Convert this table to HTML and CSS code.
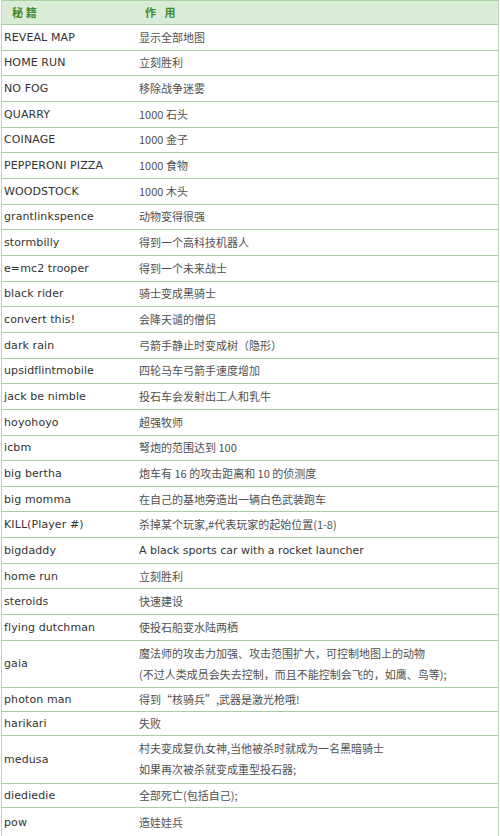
FILE: index.html
```html
<!DOCTYPE html>
<html lang="zh">
<head>
<meta charset="utf-8">
<title>秘籍</title>
<link rel="stylesheet" href="styles.css">
</head>
<body>
<div class="sheet">
  <div class="row head"><div class="c1">秘&nbsp;籍</div><div class="c2">作&nbsp;用</div></div>
  <div class="row"><div class="c1">REVEAL MAP</div><div class="c2 zh">显示全部地图</div></div>
  <div class="row"><div class="c1">HOME RUN</div><div class="c2 zh">立刻胜利</div></div>
  <div class="row"><div class="c1">NO FOG</div><div class="c2 zh">移除战争迷雾</div></div>
  <div class="row"><div class="c1">QUARRY</div><div class="c2 zh">1000 石头</div></div>
  <div class="row"><div class="c1">COINAGE</div><div class="c2 zh">1000 金子</div></div>
  <div class="row"><div class="c1">PEPPERONI PIZZA</div><div class="c2 zh">1000 食物</div></div>
  <div class="row"><div class="c1">WOODSTOCK</div><div class="c2 zh">1000 木头</div></div>
  <div class="row"><div class="c1">grantlinkspence</div><div class="c2 zh">动物变得很强</div></div>
  <div class="row"><div class="c1">stormbilly</div><div class="c2 zh">得到一个高科技机器人</div></div>
  <div class="row"><div class="c1">e=mc2 trooper</div><div class="c2 zh">得到一个未来战士</div></div>
  <div class="row"><div class="c1">black rider</div><div class="c2 zh">骑士变成黑骑士</div></div>
  <div class="row"><div class="c1">convert this!</div><div class="c2 zh">会降天谴的僧侣</div></div>
  <div class="row"><div class="c1">dark rain</div><div class="c2 zh">弓箭手静止时变成树（隐形）</div></div>
  <div class="row"><div class="c1">upsidflintmobile</div><div class="c2 zh">四轮马车弓箭手速度增加</div></div>
  <div class="row"><div class="c1">jack be nimble</div><div class="c2 zh">投石车会发射出工人和乳牛</div></div>
  <div class="row"><div class="c1">hoyohoyo</div><div class="c2 zh">超强牧师</div></div>
  <div class="row"><div class="c1">icbm</div><div class="c2 zh">弩炮的范围达到 100</div></div>
  <div class="row"><div class="c1">big bertha</div><div class="c2 zh">炮车有 16 的攻击距离和 10 的侦测度</div></div>
  <div class="row"><div class="c1">big momma</div><div class="c2 zh">在自己的基地旁造出一辆白色武装跑车</div></div>
  <div class="row"><div class="c1">KILL(Player #)</div><div class="c2 zh">杀掉某个玩家,#代表玩家的起始位置(1-8)</div></div>
  <div class="row"><div class="c1">bigdaddy</div><div class="c2">A black sports car with a rocket launcher</div></div>
  <div class="row"><div class="c1">home run</div><div class="c2 zh">立刻胜利</div></div>
  <div class="row"><div class="c1">steroids</div><div class="c2 zh">快速建设</div></div>
  <div class="row"><div class="c1">flying dutchman</div><div class="c2 zh">使投石船变水陆两栖</div></div>
  <div class="row tall"><div class="c1">gaia</div><div class="c2 zh">魔法师的攻击力加强、攻击范围扩大，可控制地图上的动物<br>(不过人类成员会失去控制，而且不能控制会飞的，如鹰、鸟等);</div></div>
  <div class="row short"><div class="c1">photon man</div><div class="c2 zh">得到“核骑兵”,武器是激光枪哦!</div></div>
  <div class="row short"><div class="c1">harikari</div><div class="c2 zh">失败</div></div>
  <div class="row tall2"><div class="c1">medusa</div><div class="c2 zh">村夫变成复仇女神,当他被杀时就成为一名黑暗骑士<br>如果再次被杀就变成重型投石器;</div></div>
  <div class="row short"><div class="c1">diediedie</div><div class="c2 zh">全部死亡(包括自己);</div></div>
  <div class="row last"><div class="c1">pow</div><div class="c2 zh">造娃娃兵</div></div>
</div>
</body>
</html>
```

FILE: styles.css
```css
html, body {
  margin: 0;
  padding: 0;
  background: #ffffff;
}
.sheet {
  margin-left: 1px;
  width: 496px;
  border-left: 1px solid #b9dbb3;
  border-right: 1px solid #b9dbb3;
  font-family: "DejaVu Sans", "Noto Sans CJK SC", sans-serif;
  font-size: 11px;
  color: #333333;
  display: flex;
  flex-direction: column;
}
.row {
  display: grid;
  grid-template-columns: 135px 1fr;
  align-items: center;
  height: 25.67px;
  box-sizing: border-box;
  border-bottom: 1px solid #a9cda2;
  line-height: 21px;
}
.row.head {
  height: 25px;
  border-top: 1px solid #a9cfa3;
  background: #daecd8;
  color: #3f8a2e;
  font-weight: bold;
  font-family: "Noto Sans CJK SC", sans-serif;
  font-size: 11px;
  letter-spacing: 3px;
}
.row.head .c1 { padding-left: 10px; }
.row.head .c2 { padding-left: 8px; }
.row.tall { height: 47px; }
.row.tall2 { height: 48px; }
.row.short { height: 24px; }
.row.last { height: 29px; border-bottom: none; }
.c1 {
  padding-left: 2px;
  letter-spacing: 0.1px;
}
.c2 {
  padding-left: 2px;
}
.zh {
  font-family: "Noto Sans CJK SC", sans-serif;
  color: #505050;
  font-size: 11px;
}
```
